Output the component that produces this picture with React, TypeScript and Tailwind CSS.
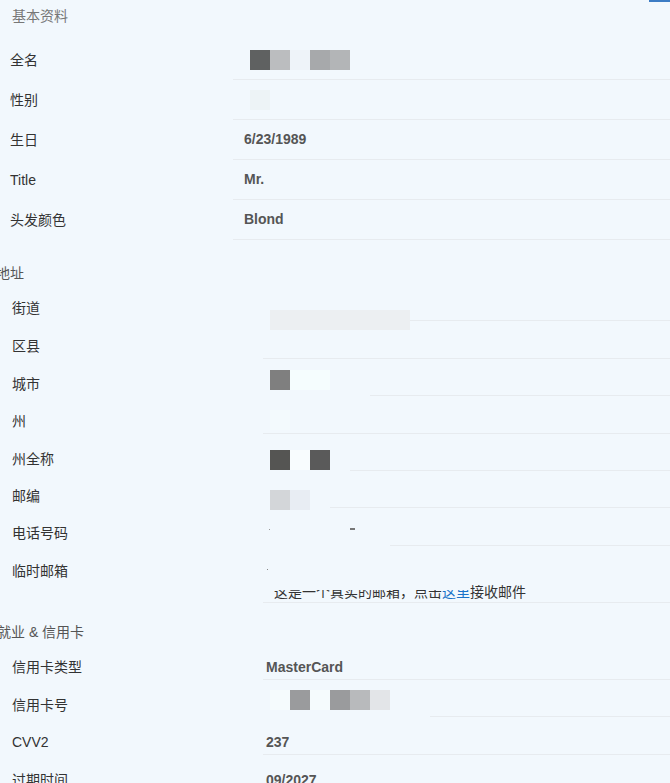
import React from 'react';

// Redaction mosaic that sits over the value column (20px grid)
const mosaic = [
  // 全名
  'left-[250px] top-[50px] w-5 h-5 bg-[#5f6161]',
  'left-[270px] top-[50px] w-5 h-5 bg-[#bbbdbf]',
  'left-[290px] top-[50px] w-5 h-5 bg-[#eef3f9]',
  'left-[310px] top-[50px] w-5 h-5 bg-[#a7a9ab]',
  'left-[330px] top-[50px] w-5 h-5 bg-[#b3b5b7]',
  // 性别
  'left-[250px] top-[90px] w-5 h-5 bg-[#edf3f6]',
  // 街道
  'left-[250px] top-[310px] w-5 h-5 bg-[#f2f8fd]',
  'left-[270px] top-[310px] w-[140px] h-5 bg-[#eceff2]',
  // 城市
  'left-[270px] top-[370px] w-5 h-5 bg-[#7f7f7f]',
  'left-[290px] top-[370px] w-10 h-5 bg-[#f5fdfe]',
  'left-[250px] top-[390px] w-[120px] h-5 bg-[#f2f8fd]',
  // 州
  'left-[270px] top-[410px] w-5 h-5 bg-[#f3fafd]',
  // 州全称
  'left-[270px] top-[450px] w-5 h-5 bg-[#555553]',
  'left-[290px] top-[450px] w-5 h-5 bg-[#f8fcfe]',
  'left-[310px] top-[450px] w-5 h-5 bg-[#5a5a5a]',
  'left-[250px] top-[470px] w-[100px] h-5 bg-[#f2f8fd]',
  // 邮编
  'left-[250px] top-[490px] w-5 h-5 bg-[#f2f8fd]',
  'left-[270px] top-[490px] w-5 h-5 bg-[#d3d6d9]',
  'left-[290px] top-[490px] w-5 h-5 bg-[#e8edf3]',
  'left-[310px] top-[490px] w-5 h-5 bg-[#f2f8fd]',
  // 电话号码
  'left-[250px] top-[530px] w-[140px] h-5 bg-[#f2f8fd]',
  // 临时邮箱
  'left-[250px] top-[550px] w-[220px] h-10 bg-[#f2f8fd]',
  // 信用卡号
  'left-[270px] top-[690px] w-5 h-5 bg-[#f5fbfd]',
  'left-[290px] top-[690px] w-5 h-5 bg-[#9a9b9d]',
  'left-[310px] top-[690px] w-5 h-5 bg-[#f5fbfd]',
  'left-[330px] top-[690px] w-5 h-5 bg-[#9a9b9d]',
  'left-[350px] top-[690px] w-5 h-5 bg-[#b8babc]',
  'left-[370px] top-[690px] w-5 h-5 bg-[#e3e5e8]',
  'left-[250px] top-[710px] w-[180px] h-5 bg-[#f2f8fd]',
  // leftover specks
  'left-[269px] top-[529px] w-px h-px bg-[#9a9a9a]',
  'left-[350px] top-[528px] w-[5px] h-[2px] bg-[#777]',
  'left-[267px] top-[569px] w-px h-px bg-[#888]',
];

const basic = [
  { label: '全名', value: '' },
  { label: '性别', value: '' },
  { label: '生日', value: '6/23/1989' },
  { label: 'Title', value: 'Mr.' },
  { label: '头发颜色', value: 'Blond' },
];

const address = [
  { label: '街道', h: 'h-[38px]' },
  { label: '区县', h: 'h-[38px]' },
  { label: '城市', h: 'h-[37px]' },
  { label: '州', h: 'h-[38px]' },
  { label: '州全称', h: 'h-[37px]' },
  { label: '邮编', h: 'h-[37px]' },
  { label: '电话号码', h: 'h-[38px]' },
];

const card = [
  { label: '信用卡类型', value: 'MasterCard', h: 'h-[38px]' },
  { label: '信用卡号', value: '', h: 'h-[37px]' },
  { label: 'CVV2', value: '237', h: 'h-[38px]' },
  { label: '过期时间', value: '09/2027', h: 'h-[38px]' },
];

function Row({ label, value, h }: { label: string; value?: string; h: string }) {
  return (
    <div className={`flex ${h}`}>
      <div className="w-[263px] shrink-0 pl-3 pt-[15px] leading-5 text-[#333333]">{label}</div>
      <div className="flex-1 border-b border-[#e7ebef] pl-[3px] pt-[15px] font-bold leading-5 text-[#555]">
        {value}
      </div>
    </div>
  );
}

export default function App() {
  return (
    <div
      className="relative h-[783px] w-[670px] overflow-hidden bg-[#f2f8fd] text-[14px]"
      style={{ fontFamily: '"Liberation Sans", "Noto Sans CJK SC", "Noto Sans", sans-serif' }}
    >
      {/* 基本资料 */}
      <section>
        <div className="h-10 pl-3 pt-[6px] leading-5 text-[#777]">基本资料</div>
        {basic.map((r) => (
          <div key={r.label} className="flex h-10 items-center">
            <div className="w-[233px] shrink-0 pl-[10px] text-[#333333]">{r.label}</div>
            <div className="flex h-full flex-1 items-center border-b border-[#e7ebef] pl-[11px] font-bold text-[#555]">
              {r.value}
            </div>
          </div>
        ))}
      </section>

      {/* 地址 */}
      <section>
        <div className="-ml-1 h-[43px] pt-[23px] leading-5 text-[#555]">地址</div>
        {address.map((r) => (
          <Row key={r.label} label={r.label} h={r.h} />
        ))}
        <div className="flex h-[57px]">
          <div className="w-[263px] shrink-0 pl-3 pt-[15px] leading-5 text-[#333333]">临时邮箱</div>
          <div className="flex-1 border-b border-[#e7ebef] pt-[14px] leading-5">
            <div className="h-5" />
            <div className="mt-[2px] pl-[11px] text-[#333]">
              这是一个真实的邮箱，点击<span className="text-[#1a73c9]">这里</span>接收邮件
            </div>
          </div>
        </div>
      </section>

      {/* 就业 & 信用卡 */}
      <section>
        <div className="-ml-[3px] h-[39px] pt-[19px] leading-5 text-[#555]">就业 &amp; 信用卡</div>
        {card.map((r) => (
          <Row key={r.label} label={r.label} value={r.value} h={r.h} />
        ))}
      </section>

      {mosaic.map((c, i) => (
        <div key={i} className={`absolute ${c}`} />
      ))}

      {/* edge of a button above the fold */}
      <div className="absolute right-0 top-0 h-[2px] w-[21px] bg-[#3d7cc4]" />
    </div>
  );
}
